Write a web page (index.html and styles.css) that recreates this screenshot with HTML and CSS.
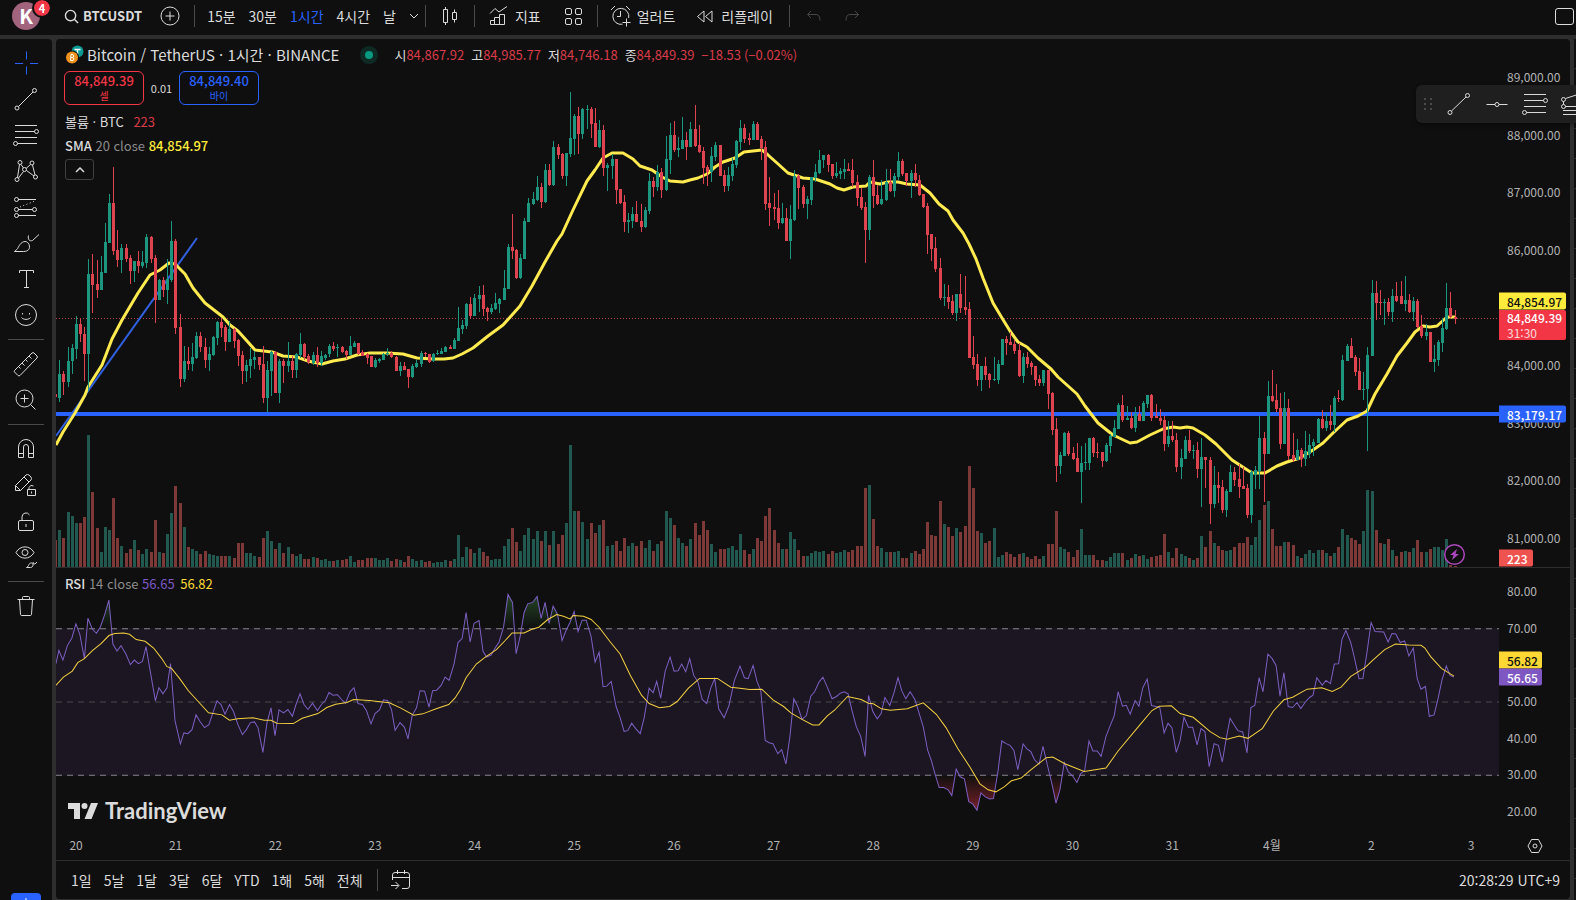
FILE: index.html
```
<!DOCTYPE html>
<html lang="ko">
<head>
    <meta charset="UTF-8">
    <meta name="viewport" content="width=device-width, initial-scale=1.0">
    <title>BTCUSDT 84,849.39</title>
    <link rel="stylesheet" href="styles.css">
</head>
<body>
    <header class="topbar">
        <button class="avatar" aria-label="프로필">K<span class="badge">4</span></button>
        <button class="symbol">
            <svg class="icon-search" viewBox="0 0 16 16"><circle cx="7" cy="7" r="5.5"/><path d="M11 11l4 4"/></svg>
            BTCUSDT
        </button>
        <button class="compare" aria-label="비교">
            <svg viewBox="0 0 20 20"><circle cx="10" cy="10" r="9"/><path d="M10 5.5v9M5.5 10h9"/></svg>
        </button>
        <span class="sep"></span>
        <nav class="intervals">
            <button>15분</button>
            <button>30분</button>
            <button class="active">1시간</button>
            <button>4시간</button>
            <button>날</button>
            <button class="chevron" aria-label="더보기"><svg viewBox="0 0 10 6"><path d="M1 1l4 4 4-4"/></svg></button>
        </nav>
        <span class="sep"></span>
        <button class="tool" aria-label="캔들"><svg viewBox="0 0 20 20"><path d="M3.5 3.5h4v13h-4zM5.5 1v2.5M5.5 16.5v2.5M12.5 6.5h4v7h-4zM14.5 3.5v3M14.5 13.5v3"/></svg></button>
        <span class="sep"></span>
        <button class="tool indicators"><svg viewBox="0 0 20 20"><path d="M1.5 18.5v-4h4v4zM5.5 18.5v-7h5v7zM10.5 18.5h5v-10h-5v3M1 7.5l5-5 4 3.500L18 .5"/></svg>지표</button>
        <button class="tool" aria-label="템플릿"><svg viewBox="0 0 20 20"><rect x="2.5" y="2.5" width="6" height="6" rx="1.5"/><rect x="12.5" y="2.5" width="6" height="6" rx="1.5"/><rect x="2.5" y="12.5" width="6" height="6" rx="1.5"/><rect x="12.5" y="12.5" width="6" height="6" rx="1.5"/></svg></button>
        <span class="sep"></span>
        <button class="tool alert"><svg viewBox="0 0 22 22"><path d="M12.5 19.2A8 8 0 1 1 18.7 13M1 5l4-4M16 1l4 4M10.5 6v5.5H7M16.5 13.5v8M12.5 17.5h8"/></svg>얼러트</button>
        <button class="tool replay"><svg viewBox="0 0 20 20"><path d="M9 5v11L2.5 10.5zM17 5v11l-6.5-5.5z"/></svg>리플레이</button>
        <span class="sep"></span>
        <button class="tool off" aria-label="실행 취소"><svg viewBox="0 0 20 20"><path d="M7 5L3.5 8.5 7 12M3.5 8.5H12q4 0 4 6"/></svg></button>
        <button class="tool off" aria-label="다시 실행"><svg viewBox="0 0 20 20"><path d="M13 5l3.5 3.5L13 12M16.5 8.5H8q-4 0-4 6"/></svg></button>
        <button class="layout" aria-label="레이아웃"></button>
    </header>

    <div class="workspace">
        <aside class="tools">
            <button class="active" aria-label="십자선"><svg viewBox="0 0 28 28"><path d="M14.5 2.5v8M14.5 17.5v8M3 14.5h8M18 14.5h8"/></svg></button>
            <button aria-label="추세선"><svg viewBox="0 0 28 28"><circle cx="5" cy="23" r="2"/><circle cx="22.5" cy="5.5" r="2"/><path d="M6.5 21.5L21 7"/></svg></button>
            <button aria-label="피보나치"><svg viewBox="0 0 28 28"><path d="M3 4.5h22M3 10.5h19.5M3 16.5h22M5.5 22.5H25"/><circle cx="24.5" cy="10.5" r="2"/><circle cx="3.5" cy="22.5" r="2"/></svg></button>
            <button aria-label="패턴"><svg viewBox="0 0 28 28"><circle cx="8" cy="5.5" r="2"/><circle cx="20" cy="6" r="2"/><circle cx="5" cy="22.5" r="2"/><circle cx="23.5" cy="20" r="2"/><circle cx="12.5" cy="12.5" r="2"/><path d="M7.5 7.5L5.5 20.5M20.5 8l2.5 10M9 7.5l2.5 3.5M18.5 7.5l-4.5 4M11.5 14.5L6.5 21M14.5 13.5l7.5 5.5"/></svg></button>
            <button aria-label="예측"><svg viewBox="0 0 28 28"><path d="M6 6.5h18M6 16.5h14.5M6 22.5h18"/><path stroke-dasharray="1 2.5" d="M8 14L23 8"/><circle cx="4.5" cy="6.5" r="2"/><circle cx="4.5" cy="16.5" r="2"/><circle cx="22.5" cy="16.5" r="2"/><circle cx="4.5" cy="22.5" r="2"/></svg></button>
            <button aria-label="브러쉬"><svg viewBox="0 0 28 28"><path d="M2.5 22.5h9c5 0 7-3 5.5-7s-6-4-9 0-1 3.5-5.5 7zM16.5 6.5c-1 4 1 6 4 5l6.5-6"/></svg></button>
            <button aria-label="텍스트"><svg viewBox="0 0 28 28"><path d="M7.5 8V5.5h14V8M14.5 5.5v17M12 22.5h5"/></svg></button>
            <button aria-label="아이콘"><svg viewBox="0 0 28 28"><circle cx="14" cy="14" r="10.5"/><path d="M10.5 12v1.5M17.5 12v1.5M9.5 16.5c1.5 2.5 7.5 2.5 9 0"/></svg></button>
            <hr>
            <button aria-label="자"><svg viewBox="0 0 28 28"><path d="M2.5 20.5l17.5-17.5q1.200-.8 2 0l3 3q.8 1 0 2L8 25.5q-1.200.8-2 0l-3.5-3.5q-.6-.8 0-1.500zM6.5 16.5l2 2M10 13l2.5 2.5M13.5 9.5l2 2M17 6l2.5 2.5"/></svg></button>
            <button aria-label="확대"><svg viewBox="0 0 28 28"><circle cx="12.5" cy="12.5" r="8.5"/><path d="M18.5 18.5l5 5M12.5 8.5v8M8.5 12.5h8"/></svg></button>
            <hr>
            <button aria-label="자석"><svg viewBox="0 0 28 28"><path d="M6.5 22.5V12a7.5 7.5 0 0 1 15 0v10.5h-5V12a2.5 2.5 0 0 0-5 0v10.5zM6.5 18.5h5M16.5 18.5h5"/></svg></button>
            <button aria-label="그리기 모드 유지"><svg viewBox="0 0 28 28"><path d="M3.5 19.5v-5L14 4q1.500-1 3 0l2 2q1 1.500 0 3L8.500 19.500zM12 6l5 5M3.500 14.500l5 5M15.500 18.500h8v6h-8zM17 18.500v-2q1.500-3.500 4.500-1.500M19.500 20.500v2"/></svg></button>
            <button aria-label="잠금"><svg viewBox="0 0 28 28"><rect x="6.5" y="13.5" width="15" height="10" rx="1.5"/><path d="M10 13.5V10a4 4 0 0 1 7.5-2M14 17v3"/></svg></button>
            <button aria-label="숨기기"><svg viewBox="0 0 28 28"><path d="M4 9.5C8 2 18 2 22 9.500 18 17 8 17 4 9.500z"/><circle cx="13" cy="9.500" r="3"/><path d="M14.500 24.500h4c3 0 3.500-4 1-4.500-3-.5-2 3-5 4.500zM21 19q0 2.500 2 2l2-2"/></svg></button>
            <hr>
            <button aria-label="삭제"><svg viewBox="0 0 28 28"><path d="M5.5 7.5h17M10.5 7.5v-2q0-1 1-1h5q1 0 1 1v2M7.5 7.5l1 15q.2 1 1.200 1h8.600q1 0 1.200-1l1-15"/></svg></button>
            <button class="promo" aria-label="더보기"><svg viewBox="0 0 10 10"><path d="M5 5v5"/></svg></button>
        </aside>

        <main class="chart">
            <section class="pane price-pane">
                <div class="plot">
                    <svg id="priceChart" viewBox="56 39 1443 528" preserveAspectRatio="none"></svg>
                    <div class="legend">
                        <div class="legend-title">
                            <svg class="coins" viewBox="0 0 20 20"><circle cx="12.5" cy="6.5" r="6" fill="#0b9a93"/><path d="M9.5 4.5h6M12.5 4.5v5" stroke="#fff" stroke-width="1.5"/><circle cx="7" cy="12.5" r="7" fill="#0f0f0f"/><circle cx="7" cy="12.5" r="6" fill="#f0931e"/><path d="M6 9.5h2q1.5 1.5 0 3 2 1.5 0 3H5.5zM5.8 12.5H8" fill="none" stroke="#fff"/></svg>
                            <h1>Bitcoin / TetherUS · 1시간 · BINANCE</h1>
                            <span class="status"></span>
                            <p class="ohlc">
                                <span>시<b>84,867.92</b></span>
                                <span>고<b>84,985.77</b></span>
                                <span>저<b>84,746.18</b></span>
                                <span>종<b>84,849.39</b></span>
                                <b>−18.53 (−0.02%)</b>
                            </p>
                        </div>
                        <div class="order">
                            <button class="sell">84,849.39<small>셀</small></button>
                            <span class="spread">0.01</span>
                            <button class="buy">84,849.40<small>바이</small></button>
                        </div>
                        <p class="study volume">볼륨 · BTC <b class="red">223</b></p>
                        <p class="study"><strong>SMA</strong> <i>20 close</i> <b class="yellow">84,854.97</b></p>
                        <button class="collapse" aria-label="접기"><svg viewBox="0 0 10 6"><path d="M1 5l4-4 4 4"/></svg></button>
                    </div>
                </div>
                <div class="scale" id="priceScale"></div>
            </section>

            <section class="pane rsi-pane">
                <div class="plot">
                    <svg id="rsiChart" viewBox="56 568 1443 262" preserveAspectRatio="none"></svg>
                    <div class="legend">
                        <p class="study"><strong>RSI</strong> <i>14 close</i> <b class="purple">56.65</b> <b class="gold">56.82</b></p>
                    </div>
                    <div class="logo">
                        <svg viewBox="0 0 30 16"><path d="M0 0h12v16H6V6H0z"/><circle cx="16.5" cy="3" r="3"/><path d="M23 0h7l-6.5 16h-7z"/></svg>
                        TradingView
                    </div>
                </div>
                <div class="scale" id="rsiScale"></div>
            </section>

            <div class="time-axis">
                <div class="days" id="timeScale"></div>
                <button aria-label="차트 설정"><svg viewBox="0 0 16 16"><path d="M4.5 1.5h7L15 8l-3.5 6.5h-7L1 8z"/><circle cx="8" cy="8" r="2"/></svg></button>
            </div>

            <footer class="ranges">
                <button>1일</button>
                <button>5날</button>
                <button>1달</button>
                <button>3달</button>
                <button>6달</button>
                <button>YTD</button>
                <button>1해</button>
                <button>5해</button>
                <button>전체</button>
                <span class="sep"></span>
                <button aria-label="날짜로 이동"><svg viewBox="0 0 20 20"><path d="M1.5 10V5q0-2.5 2.5-2.5h12q2.5 0 2.5 2.5v11q0 2.5-2.5 2.5h-5M1.5 7.5h17M6.5 0v4M13.5 0v4M0 15.5h7.5M4.5 12l3.5 3.5L4.5 19"/></svg></button>
                <time>20:28:29 UTC+9</time>
            </footer>
        </main>

        <aside class="watchlist"></aside>
    </div>

    <div class="favorites">
        <svg class="grip" viewBox="0 0 8 12"><path d="M0 0h2v2H0zM6 0h2v2H6zM0 5h2v2H0zM6 5h2v2H6zM0 10h2v2H0zM6 10h2v2H6z"/></svg>
        <button aria-label="추세선"><svg viewBox="0 0 28 28"><circle cx="5" cy="22.5" r="2"/><circle cx="22.5" cy="5.5" r="2"/><path d="M6.5 21L21 7"/></svg></button>
        <button aria-label="가로선"><svg viewBox="0 0 28 28"><circle cx="14" cy="14.5" r="2"/><path d="M3.5 14.5h8.5M16 14.5h8.5"/></svg></button>
        <button aria-label="피보나치"><svg viewBox="0 0 28 28"><path d="M3 4.5h22M3 10.5h19.5M3 16.5h22M5.5 22.5H25"/><circle cx="24.5" cy="10.5" r="2"/><circle cx="3.5" cy="22.5" r="2"/></svg></button>
        <button aria-label="추세 기반 피보나치"><svg viewBox="0 0 28 28"><circle cx="4.5" cy="9.5" r="2"/><circle cx="4.5" cy="16.5" r="2"/><path d="M6.5 8.5L25 2.5M4.5 11.5v3M6.5 16.5H25M4 20.5h21M4 24.5h21"/></svg></button>
    </div>

    <script src="chart.js"></script>
</body>
</html>
```
FILE: styles.css
```
:root {
    --panel: #0f0f0f;
    --frame: #2e2e2e;
    --text: #dbdbdb;
    --muted: #b2b2b2;
    --red: #f23645;
    --blue: #2962ff;
    --up: #1c967f;
    --down: #dd4450;
}

* {
    box-sizing: border-box;
}

body {
    position: relative;
    margin: 0;
    height: 100vh;
    display: flex;
    flex-direction: column;
    gap: 4px;
    overflow: hidden;
    background: var(--frame);
    color: var(--text);
    font-family: "Noto Sans CJK KR", "Noto Sans", sans-serif;
    font-size: 14px;
    line-height: 20px;
}

h1,
p {
    margin: 0;
    font-weight: normal;
}

b,
i {
    font-weight: normal;
    font-style: normal;
}

button {
    display: flex;
    align-items: center;
    justify-content: center;
    padding: 0;
    border: none;
    background: none;
    color: inherit;
    font: inherit;
    cursor: pointer;
}

svg {
    display: block;
    flex: none;
    overflow: hidden;
}

button svg {
    fill: none;
    stroke: currentColor;
}

.sep {
    width: 1px;
    height: 22px;
    background: #4a4a4a;
}

/* top toolbar */
.topbar {
    flex: none;
    display: flex;
    align-items: center;
    height: 35px;
    padding: 0 2px 3px 12px;
    background: var(--panel);
}

.avatar {
    position: relative;
    width: 28px;
    height: 28px;
    margin-right: 24px;
    border-radius: 50%;
    background: #a2637c;
    color: #fff;
    font-size: 20px;
    font-weight: bold;
}

.badge {
    position: absolute;
    top: -2px;
    right: -10px;
    width: 16px;
    height: 16px;
    border-radius: 50%;
    outline: 2px solid var(--panel);
    background: var(--red);
    font-size: 11px;
    line-height: 16px;
}

.symbol {
    gap: 4px;
    margin-right: 18px;
    font-size: 13px;
    font-weight: bold;
}

.icon-search {
    width: 15px;
    height: 15px;
    stroke-width: 1.5;
}

.compare {
    margin-right: 14px;
}

.compare svg {
    width: 20px;
    height: 20px;
}

.intervals {
    display: flex;
    gap: 13px;
    margin: 0 6px 0 12px;
}

.intervals .active {
    color: var(--blue);
}

.chevron svg {
    width: 10px;
    height: 6px;
}

.tool {
    gap: 6px;
    padding: 0 14px;
}

.tool svg {
    width: 20px;
    height: 20px;
}

.tool.indicators {
    padding-right: 8px;
}

.tool.alert {
    gap: 5px;
    padding-left: 12px;
}

.tool.alert svg {
    width: 22px;
    height: 22px;
}

.tool.replay {
    padding: 0 16px 0 6px;
}

.tool.off {
    padding: 0 4px 0 14px;
    color: #474747;
}

.layout {
    width: 19px;
    height: 17px;
    margin-left: auto;
    border: 1px solid var(--text);
    border-radius: 3px;
}

/* main frame */
.workspace {
    flex: 1;
    min-height: 0;
    display: grid;
    grid-template-columns: 52px minmax(0, 1fr) 2px;
    gap: 4px;
}

.tools {
    display: flex;
    flex-direction: column;
    align-items: center;
    padding-top: 6px;
    border-radius: 0 4px 0 0;
    background: var(--panel);
}

.tools button {
    flex: none;
    width: 36px;
    height: 36px;
}

.tools svg,
.favorites button svg {
    width: 28px;
    height: 28px;
}

.tools .active {
    color: var(--blue);
}

.tools hr {
    width: 36px;
    height: 1px;
    margin: 6px 0;
    border: none;
    background: #4a4a4a;
}

.tools .promo {
    width: 30px;
    height: 30px;
    margin: auto 0 -23px;
    align-items: flex-start;
    border-radius: 4px;
    background: var(--blue);
    color: #fff;
}

.promo svg {
    height: 10px;
}

.chart {
    display: grid;
    grid-template-rows: 529fr 263fr 30px 38px;
    margin-bottom: 1px;
    border-radius: 4px;
    background: var(--panel);
    overflow: hidden;
}

.pane {
    display: grid;
    grid-template-columns: minmax(0, 1fr) 71px;
    min-height: 0;
}

.price-pane {
    border-bottom: 1px solid var(--frame);
}

.plot,
.scale {
    position: relative;
    min-height: 0;
}

.plot > svg {
    position: absolute;
    width: 100%;
    height: 100%;
}

/* legends over the plots */
.legend {
    position: absolute;
    top: 6px;
    left: 9px;
}

.legend-title {
    display: flex;
    align-items: center;
    height: 20px;
}

.coins {
    width: 20px;
    height: 20px;
    margin-right: 2px;
}

.legend h1 {
    font-size: 15px;
    white-space: nowrap;
}

.status {
    width: 8px;
    height: 8px;
    margin: 0 21px 0 26px;
    border-radius: 50%;
    background: #089981;
    box-shadow: 0 0 0 5px #0e2a25;
}

.ohlc {
    display: flex;
    gap: 7px;
    font-size: 13px;
    white-space: nowrap;
}

.ohlc b,
.red {
    color: #d93b48;
}

.order {
    display: flex;
    align-items: center;
    margin: 6px 0 5px -1px;
}

.order button {
    flex-direction: column;
    width: 80px;
    height: 34px;
    border: 1px solid;
    border-radius: 6px;
    font-size: 13px;
    font-weight: 500;
    line-height: 16px;
}

.order small {
    font-size: 10px;
    font-weight: normal;
    line-height: 14px;
}

.sell {
    color: var(--red);
}

.buy {
    color: var(--blue);
}

.spread {
    width: 35px;
    font-size: 11px;
    text-align: center;
}

.study {
    font-size: 13px;
    line-height: 24px;
    white-space: nowrap;
}

.study i {
    color: #8c8c8c;
}

.study strong {
    font-weight: 500;
}

.study .red {
    margin-left: 6px;
}

.yellow {
    color: #ffeb3b;
    font-weight: 500;
}

.purple {
    color: #7e57c2;
}

.study .gold {
    margin-left: 2px;
    color: #fdd835;
}

.rsi-pane .legend {
    top: 4px;
}

.collapse {
    width: 29px;
    height: 21px;
    margin-top: 1px;
    border: 1px solid #404040;
    border-radius: 3px;
}

.collapse svg {
    width: 10px;
    height: 6px;
    stroke-width: 1.5;
}

.logo {
    position: absolute;
    left: 12px;
    bottom: 8px;
    display: flex;
    align-items: center;
    gap: 7px;
    font-family: Lato, sans-serif;
    font-size: 22px;
    font-weight: bold;
    line-height: 24px;
}

.logo svg {
    width: 30px;
    height: 16px;
    fill: currentColor;
}

/* scales */
.scale {
    font-size: 12px;
    line-height: 17px;
}

.scale span {
    position: absolute;
    left: 0;
    padding: 0 4px 0 8px;
    transform: translateY(-50%);
    color: var(--muted);
    white-space: nowrap;
}

.scale .tag {
    border-radius: 0 2px 2px 0;
    color: #fff;
    font-weight: 500;
}

.scale .tag-sma {
    background: #ffeb3b;
    color: #0f0f0f;
}

.scale .tag-last {
    background: var(--red);
    line-height: 15px;
}

.tag-last small {
    display: block;
    font-size: 12px;
    font-weight: normal;
    opacity: 0.8;
}

.scale .tag-line {
    background: var(--blue);
}

.scale .tag-volume {
    padding-right: 5px;
    background: #ef5350;
}

.scale .tag-gold {
    background: #fdd835;
    color: #0f0f0f;
}

.scale .tag-purple {
    background: #7e57c2;
}

.time-axis {
    display: grid;
    grid-template-columns: minmax(0, 1fr) 71px;
    border-bottom: 1px solid var(--frame);
}

.days {
    position: relative;
    color: var(--muted);
    font-size: 12px;
}

.days span {
    position: absolute;
    top: 4px;
    transform: translateX(-50%);
}

.time-axis svg {
    width: 16px;
    height: 16px;
}

.ranges {
    display: flex;
    align-items: center;
    gap: 12px;
    padding: 0 10px 0 15px;
}

.ranges svg {
    width: 20px;
    height: 20px;
}

.ranges .sep {
    margin: 0 1px 0 2px;
}

.ranges time {
    margin-left: auto;
}

.watchlist {
    background: repeating-linear-gradient(#0f0f0f 0 29px, #2e2e2e 29px 30px);
}

/* favourite drawing tools, floats over the chart */
.favorites {
    position: absolute;
    top: 85px;
    right: -11px;
    display: flex;
    align-items: center;
    gap: 10px;
    height: 38px;
    padding-left: 8px;
    border-radius: 6px;
    background: #1f1f1f;
    box-shadow: 0 2px 4px rgba(0, 0, 0, 0.4);
}

.grip {
    width: 8px;
    height: 12px;
    margin-right: 3px;
    fill: #4a4a4a;
}

/* chart marks */
.up {
    fill: var(--up);
}

.down {
    fill: var(--down);
}

.vol-up {
    fill: #215951;
}

.vol-down {
    fill: #7d3838;
}

.last-price {
    stroke: #b8434d;
    stroke-dasharray: 1 2;
}

.level {
    stroke: var(--blue);
    stroke-width: 4;
}

.trend {
    stroke: #3061e0;
    stroke-width: 2;
}

.sma {
    fill: none;
    stroke: #ffeb4f;
    stroke-width: 3;
    stroke-linejoin: round;
}

.bolt circle {
    fill: #0f0f0f;
    stroke: #ab47bc;
    stroke-width: 1.5;
}

.bolt path {
    fill: #ab47bc;
}

.band {
    fill: #1b1621;
}

.guide {
    stroke: #85858a;
    stroke-dasharray: 6 5;
}

.guide-mid {
    stroke: #4b484f;
}

.rsi {
    fill: none;
    stroke: #7e5fc4;
    stroke-width: 1;
}

.rsi-ma {
    fill: none;
    stroke: #f5d142;
    stroke-width: 1;
}
```
FILE: chart.js
```
// One bar per hour: direction, high, body top, body bottom, low, volume.
// Levels are thirds of a chart unit below the block's top.
const blocks = [
    { top: 150, bars: `d 732 732 742 742 1170,u 630 672 744 755 1140,d 664 672 695 735 1164,u 592 634 695 712 1086,
u 582 594 634 672 1098,u 498 522 597 628 1119,d 507 522 553 575 1119,d 531 553 612 692 1101,u 327 373 612 722 855,
d 312 373 404 490 1026,d 330 402 420 444 1134,u 318 367 420 420 1206,u 219 277 369 369 1131,u 132 159 279 279 1140,
d 51 159 303 315 1044,d 240 300 330 351 1164,u 282 294 330 369 1188,d 282 294 327 336 1209,d 315 324 363 402 1197,
u 333 333 363 396 1170,d 303 333 348 369 1200,u 303 336 348 354 1212,u 252 261 339 354 1197,d 258 261 327 339 1206,
d 315 324 450 519 1110,u 387 390 450 450 1206,d 381 390 420 441 1209,u 327 387 420 462 1152,u 213 273 390 396 1089,
d 267 273 534 552 1008,d 492 531 687 711 1059,u 588 633 687 696 1131,d 591 633 642 660 1191,u 579 621 642 663 1197,
u 546 558 624 627 1203,d 546 558 591 606 1212,d 564 591 630 654 1203,u 591 612 630 663 1212,u 558 561 615 618 1215,
u 513 516 564 585 1218,d 504 516 534 561 1218,d 525 531 576 603 1218,u 513 537 576 576 1218,d 534 537 573 594 1224,
d 567 570 618 648 1179,d 603 615 663 702 1179,u 630 645 663 696 1209,u 594 627 648 684 1209,u 603 621 630 657 1218,
d 621 621 645 660 1221,d 588 642 744 759 1164,u 633 660 744 786 1143,u 603 606 663 738 1173,d 603 606 729 729 1197,
u 627 633 729 759 1179,d 627 633 648 699 1209,u 576 633 648 666 1191,d 618 633 660 684 1212,u 609 612 660 684 1218,
u 549 582 615 624 1212,d 579 582 621 630 1227,d 612 618 636 642 1227,u 606 615 639 645 1221,d 591 615 639 651 1224,
u 603 618 639 648 1230,u 612 615 624 630 1227,u 582 588 612 621 1233,d 576 588 597 603 1233,u 582 591 593 621 1230,
d 588 591 606 609 1230,d 600 603 615 627 1227,u 558 588 615 615 1218,u 573 579 591 591 1236,d 579 579 612 615 1230,
d 600 606 618 618 1230,d 609 612 624 642 1224,d 618 618 651 651 1224,u 624 630 651 654 1224,u 624 627 633 639 1230,
u 609 612 630 630 1230,u 594 609 612 618 1224,d 603 609 621 624 1233,d 618 621 663 663 1227,u 636 648 663 678 1230,
d 636 648 660 660 1236,d 657 657 681 714 1218,u 642 648 681 684 1227,u 630 639 651 654 1233,u 603 609 642 651 1230,
d 606 609 612 621 1236,d 612 612 636 639 1233,u 609 612 633 636 1239,u 600 609 612 615 1236` },
    { top: 80, bars: `u 804 813 822 822 1446,u 798 801 816 816 1440,d 795 801 806 806 1443,u 774 780 806 806 1438,
u 681 744 782 782 1365,u 720 735 746 762 1431,u 669 672 738 747 1401,d 651 672 708 717 1407,u 642 654 708 708 1419,
u 618 645 657 696 1404,d 615 645 687 708 1416,d 681 684 696 723 1428,u 672 684 696 702 1440,u 639 669 687 690 1437,
u 654 657 672 699 1437,u 570 624 660 660 1398,u 492 501 627 627 1377,d 402 501 513 537 1344,d 507 510 594 597 1386,
u 522 534 594 597 1413,u 414 423 537 537 1365,u 354 369 426 426 1344,u 336 357 372 375 1377,u 288 321 360 363 1353,
d 309 321 366 384 1383,u 252 270 366 369 1353,d 252 270 315 318 1395,u 183 201 315 318 1353,d 192 201 225 237 1392,
d 219 222 288 297 1365,u 219 219 288 318 1329,u 36 174 222 231 1095,u 102 108 177 225 1293,d 81 108 162 222 1293,
u 84 87 162 177 1326,u 75 86 89 147 1377,d 81 87 132 174 1329,d 84 129 201 201 1359,u 120 150 201 204 1335,
d 135 150 264 288 1320,u 249 255 264 333 1398,u 222 237 258 297 1395,d 237 237 330 372 1383,d 327 327 369 372 1413,
d 345 366 426 456 1374,u 399 420 426 459 1398,u 381 402 423 444 1389,d 363 402 426 426 1398,d 372 423 441 456 1383,
u 381 390 441 444 1404,u 279 303 393 402 1380,d 291 303 321 351 1413,u 255 276 321 333 1392,d 264 276 330 354 1383,
u 168 237 330 333 1293,u 129 165 240 282 1314,d 123 165 210 216 1335,u 171 204 210 231 1374,u 111 180 207 207 1389,
d 156 180 201 240 1398,u 126 147 201 201 1377,d 75 147 198 201 1329,d 135 195 216 219 1365,d 201 213 264 312 1323,
d 255 261 276 318 1350,u 201 228 276 306 1392,u 186 195 231 243 1416,d 195 195 288 288 1407,d 270 285 318 336 1407,
u 261 285 318 333 1404,u 234 252 288 303 1398,u 180 183 255 264 1410,u 120 144 186 210 1362,d 132 144 177 189 1410,
d 159 174 180 195 1422,u 123 132 180 180 1407,d 126 132 180 180 1374,d 168 177 204 240 1383,d 183 201 372 390 1308,
d 291 369 384 438 1284,d 339 381 387 420 1350,d 330 384 429 447 1389,u 369 414 429 432 1407,d 384 414 483 483 1407,
u 375 417 483 537 1356,u 270 288 420 423 1377,d 282 288 324 387 1410,d 315 321 372 384 1428,u 348 357 372 417 1428,
u 291 291 360 375 1419,u 252 276 294 306 1413,u 210 240 279 282 1416,u 225 225 240 264 1413,d 222 225 255 276 1422` },
    { top: 130, bars: `d 102 102 138 147 1263,u 96 129 138 144 1269,u 114 123 132 147 1266,u 87 117 126 147 1260,
d 99 117 123 123 1266,d 87 120 159 171 1260,d 135 156 204 228 1248,d 174 201 234 240 1248,d 216 231 300 399 1074,
u 135 141 300 330 1065,d 90 141 198 234 1167,d 165 195 222 225 1248,u 150 207 222 225 1254,u 117 156 210 213 1266,
d 117 156 183 186 1266,u 129 138 183 201 1266,u 66 93 141 150 1263,d 87 93 132 138 1284,d 129 129 153 168 1284,
u 120 129 153 204 1269,d 102 129 150 171 1263,d 135 150 195 198 1272,d 192 192 231 234 1257,d 219 228 315 372 1176,
d 312 312 357 393 1215,d 321 354 417 426 1218,d 384 414 504 510 1113,u 462 501 504 528 1182,d 465 501 516 537 1191,
d 495 513 549 555 1218,u 492 492 549 573 1194,d 432 492 534 549 1206,d 438 531 540 555 1188,d 516 537 684 684 1008,
d 618 681 705 717 1074,d 672 702 750 768 1203,u 708 708 750 783 1209,d 681 708 735 750 1239,d 729 732 750 774 1233,
u 681 747 750 753 1194,u 690 702 750 762 1281,u 627 627 705 705 1275,d 618 627 639 675 1266,d 606 636 645 645 1272,
d 630 642 663 672 1281,d 639 660 738 741 1272,u 669 681 738 759 1269,d 666 681 702 714 1281,d 693 699 711 735 1287,
d 708 708 750 768 1278,d 735 747 759 768 1287,u 720 720 759 768 1278,d 720 720 792 837 1242,d 786 789 900 915 1242,
d 864 897 1008 1056 1143,u 966 975 1008 1032 1251,u 906 909 978 978 1257,d 903 909 972 978 1266,d 951 969 987 990 1281,
d 939 984 1026 1026 1260,u 948 999 1026 1119 1197,u 939 996 999 1020 1275,u 924 924 999 1020 1275,d 921 924 969 981 1275,
d 939 966 969 984 1290,d 966 966 993 1011 1290,u 939 945 993 996 1293,u 912 918 948 969 1281,u 870 894 921 921 1269,
u 819 825 897 897 1269,d 795 825 870 876 1269,u 828 864 870 870 1290,d 846 864 894 897 1284,u 831 852 894 906 1272,
d 828 852 873 873 1278,u 813 819 873 873 1275,u 795 795 822 834 1287,d 792 795 864 873 1281,d 822 858 864 864 1278,
d 837 864 873 885 1275,d 858 870 942 963 1212,u 873 918 942 951 1266,d 873 918 930 936 1284,d 909 930 1011 1026 1254,
u 957 984 1011 1047 1272,u 918 930 987 987 1278,d 900 930 963 969 1284,u 945 960 963 987 1290,d 936 960 1017 1044 1284,
u 924 981 1017 1131 1218,d 981 981 990 1074 1251,d 981 990 1122 1182 1203,u 1008 1065 1122 1134 1239,
d 1026 1065 1074 1119 1248,d 1050 1071 1140 1149 1260,u 1077 1083 1140 1161 1263` },
    { top: 250, bars: `u 645 666 726 726 900,d 651 666 690 708 891,d 642 687 711 744 879,d 651 708 717 717 879,
d 702 714 795 804 861,u 660 666 795 819 885,u 648 660 675 717 861,u 498 564 663 717 810,d 546 564 612 756 765,
u 393 438 612 612 753,d 360 438 453 456 837,d 402 450 477 486 888,d 429 474 582 597 888,u 426 474 582 582 876,
d 447 474 618 630 876,d 549 615 630 636 885,u 567 600 630 630 918,d 594 600 627 651 924,u 543 603 627 648 912,
u 552 585 612 624 900,u 567 576 588 618 909,u 504 507 579 579 900,d 480 507 534 537 900,u 489 513 534 543 909,
d 465 513 525 540 918,u 438 444 525 546 909,d 420 444 447 456 891,u 315 330 450 453 837,u 282 288 333 333 855,
d 264 288 324 324 864,d 315 321 366 378 870,d 324 363 420 420 882,u 366 417 420 450 843,u 291 315 417 603 720,
u 90 129 318 318 723,d 93 129 159 210 840,d 120 156 159 195 879,u 147 156 159 225 882,d 144 156 186 198 867,
u 117 138 186 216 900,d 96 138 153 156 918,d 93 138 162 162 906,u 78 150 162 183 903,d 132 150 186 189 906,
u 141 153 186 213 894,d 147 153 231 234 870,d 195 228 258 264 906,u 222 246 258 270 906,d 246 246 336 336 897,
u 285 327 336 366 891,u 270 276 330 348 891,u 204 234 279 306 900,u 99 174 237 240 867,d 126 174 201 204 945,
d 180 201 207 222 948` }
];

const sma = `56,445 63,432 75,413 85,395 88,387 102,365 112,339 122,320 138,293 150,275 160,270 169,263 175,264
185,274 193,288 205,303 223,317 230,325 238,331 247,341 255,350 272,352 283,356 297,357 308,361 322,364 333,361
345,359 357,355 370,353 387,353 403,354 417,358 433,359 444,359 453,358 462,354 473,348 488,336 503,325 512,315
520,306 532,286 545,262 557,241 562,234 573,210 587,181 595,170 603,158 612,153 623,153 633,159 640,166 652,170
662,177 670,181 683,182 690,180 698,178 707,174 715,167 723,162 735,158 744,152 762,150 768,155 777,163 788,173
803,178 815,179 830,184 837,188 844,190 853,187 866,186 870,182 880,184 888,182 898,182 907,184 920,185 930,193
939,204 948,211 953,220 963,233 969,244 976,259 983,278 993,303 1002,318 1010,331 1018,342 1027,347 1038,358
1051,369 1058,377 1077,394 1085,406 1098,423 1113,435 1130,443 1137,442 1150,435 1163,429 1173,427 1180,428
1187,427 1193,428 1205,435 1216,444 1232,460 1252,473 1265,473 1277,466 1287,462 1300,458 1313,450 1323,443
1333,433 1347,420 1358,416 1367,411 1375,394 1387,374 1397,356 1407,343 1415,332 1423,326 1430,327 1437,326
1447,317 1455,317`;

// oscillator traces, first and second half
const rsiHalves = [
    { x: 50, scale: 2.24, rsi: `13,281 20,240 29,269 39,226 49,203 58,161 67,193 77,265 85,144 95,177 104,189 113,170
122,135 132,90 141,221 150,242 159,226 170,251 180,283 189,269 198,280 207,273 215,229 225,305 236,391 244,352 253,370
262,352 270,280 280,450 292,520 300,487 309,489 318,477 327,433 336,453 346,471 356,462 365,427 374,391 383,402 392,431
402,402 411,423 421,462 431,492 440,477 449,456 458,454 466,471 477,545 486,456 495,412 504,495 513,418 523,427 533,417
543,437 551,402 560,370 569,402 578,417 588,398 599,420 608,402 617,390 625,366 634,374 644,373 653,387 662,398 672,364
681,352 690,399 700,402 709,421 719,460 728,429 738,418 747,388 756,390 765,417 773,479 784,456 794,470 802,505 811,435
821,412 829,361 839,362 849,410 857,361 866,359 876,345 885,320 894,330 905,281 914,217 923,205 932,127 941,215 950,159
961,151 970,243 978,260 988,254 997,233 1006,215 1016,170 1026,73 1036,97 1044,250 1053,199 1062,127 1070,101 1081,97
1091,79 1100,145 1109,97 1118,160 1127,108 1137,133 1147,211 1156,180 1165,156 1174,124 1183,184 1192,150 1201,150
1212,199 1221,275 1230,246 1239,349 1247,347 1257,333 1268,408 1277,441 1286,482 1294,480 1303,458 1312,474 1322,489
1331,441 1342,353 1351,367 1359,333 1368,383 1378,302 1389,260 1398,302 1407,301 1415,281 1424,304 1433,265 1442,315
1451,333 1461,387 1471,399 1480,353 1489,325 1498,415 1510,442 1521,405 1533,330`,
      average: `13,345 30,320 50,302 62,277 77,265 95,241 115,219 132,196 145,190 165,188 178,192 193,208 213,213
232,233 250,264 262,289 272,293 290,324 310,361 334,396 355,427 385,433 402,449 420,445 455,442 480,449 495,449 508,458
545,459 565,443 600,429 620,411 640,401 665,396 680,387 715,390 760,397 785,412 815,434 835,430 865,415 893,402 907,383
920,356 932,322 955,281 975,260 1000,238 1020,210 1035,188 1062,188 1078,178 1095,171 1115,148 1135,133 1150,138
1165,146 1172,136 1195,138 1212,148 1230,171 1255,215 1277,251 1300,315 1325,374 1342,399 1365,412 1388,408 1405,393
1430,353 1455,324 1495,324 1525,350` },
    { x: 740, scale: 2.063, rsi: `0,287 9,322 17,325 27,285 35,333 43,361 52,509 60,516 68,519 78,549 86,537 95,580
103,498 111,385 119,407 128,446 137,435 146,377 154,364 163,335 171,320 181,353 190,385 199,378 207,368 215,364 223,370
231,420 240,468 249,497 258,557 265,375 274,423 283,445 291,429 299,381 309,405 318,366 326,322 334,362 342,385 351,364
361,388 369,426 378,468 387,538 395,571 403,612 411,650 420,650 429,656 437,674 446,595 454,618 463,624 472,692 480,699
489,718 497,666 506,678 515,684 523,683 532,603 540,511 549,519 557,524 565,539 573,597 584,520 592,535 600,543 608,568
617,580 625,527 634,582 643,636 652,697 660,657 669,575 677,603 686,615 695,635 703,608 711,600 720,511 728,541 737,541
745,557 755,497 763,468 772,436 780,364 789,407 797,404 805,431 815,390 823,407 831,352 840,326 849,405 858,408 866,411
875,487 883,458 891,471 900,545 908,510 916,440 925,470 934,470 943,523 951,474 959,483 968,588 978,519 987,524 995,574
1003,504 1011,443 1019,462 1027,480 1037,484 1046,547 1054,411 1062,405 1071,322 1079,364 1089,251 1098,265 1106,286
1114,377 1122,307 1131,408 1140,411 1149,396 1157,414 1166,395 1175,381 1182,374 1190,322 1201,344 1209,330 1218,340
1226,281 1235,280 1242,207 1250,181 1260,217 1268,265 1277,325 1285,324 1293,250 1302,157 1310,184 1328,185 1337,215
1345,190 1353,191 1362,217 1371,212 1380,257 1389,233 1397,325 1405,356 1414,348 1422,437 1432,433 1440,385 1448,330
1457,287 1465,315 1473,320`,
      average: `0,353 20,357 45,356 68,388 90,408 105,427 125,444 150,463 163,463 180,436 195,419 222,378 250,387
265,398 275,400 292,415 310,419 345,415 378,397 405,431 425,471 450,535 475,590 495,639 512,657 528,663 545,648 560,630
580,622 600,597 632,561 645,559 670,579 710,602 755,592 780,541 825,463 850,420 865,407 890,406 908,429 935,440 970,483
990,501 1005,506 1030,496 1048,503 1078,473 1100,422 1122,388 1140,380 1170,356 1200,352 1222,363 1240,350 1260,318
1290,291 1305,270 1330,238 1352,221 1380,224 1405,225 1413,233 1425,259 1447,294 1473,317` }
];

function rect(cls, x, y, width, bottom) {
    const height = Math.max(1, bottom - y);
    return `<rect class="${cls}" x="${x}" y="${y}" width="${width}" height="${height}"/>`;
}

function drawPrice() {
    let volume = '';
    let candles = '';
    let index = -1;

    for (const block of blocks) {
        for (const bar of block.bars.split(',')) {
            const [dir, ...levels] = bar.trim().split(' ');
            const [high, top, bottom, low, vol] = levels.map(v => Math.round(block.top + v / 3));
            const x = Math.round(59.2 + index * 4.153);
            const side = dir === 'u' ? 'up' : 'down';
            volume += rect('vol-' + side, x - 1, vol, 3, 567);
            candles += rect(side, x, high, 1, low) + rect(side, x - 1, top, 3, bottom);
            index++;
        }
    }

    document.getElementById('priceChart').innerHTML = `
        <g shape-rendering="crispEdges">${volume}
            <path class="last-price" d="M56 318.5H1499"/>
            <path class="level" d="M56 414H1499"/>
        </g>
        <path class="trend" d="M56 436L197 238"/>
        <polyline class="sma" points="${sma}"/>
        <g shape-rendering="crispEdges">${candles}</g>
        <g class="bolt"><circle cx="1454.5" cy="554.5" r="9.8"/><path d="M1457 549l-7 6h3.5l-1.5 5 7-6h-3.5z"/></g>`;
}

function trace(key) {
    return rsiHalves.map(half => half[key].trim().split(/\s+/).map(point => {
        const [x, y] = point.split(',');
        return (half.x + x / half.scale).toFixed(1) + ',' + (570 + y / 3).toFixed(1);
    }).join(' ')).join(' ');
}

function drawRsi() {
    const rsi = trace('rsi');

    document.getElementById('rsiChart').innerHTML = `
        <defs>
            <linearGradient id="hot" gradientUnits="userSpaceOnUse" x1="0" y1="580" x2="0" y2="628">
                <stop offset="0" stop-color="#4caf50" stop-opacity=".5"/><stop offset="1" stop-color="#4caf50" stop-opacity="0"/>
            </linearGradient>
            <linearGradient id="cold" gradientUnits="userSpaceOnUse" x1="0" y1="774" x2="0" y2="820">
                <stop offset="0" stop-color="#f23645" stop-opacity="0"/><stop offset="1" stop-color="#f23645" stop-opacity=".6"/>
            </linearGradient>
            <clipPath id="above"><rect x="56" y="568" width="1443" height="60"/></clipPath>
            <clipPath id="below"><rect x="56" y="775" width="1443" height="60"/></clipPath>
        </defs>
        <rect class="band" x="56" y="628" width="1443" height="147"/>
        <path class="guide" d="M56 628.5H1499M56 774.5H1499"/>
        <path class="guide guide-mid" d="M56 701.5H1499"/>
        <polygon clip-path="url(#above)" fill="url(#hot)" points="56,628 ${rsi} 1455,628"/>
        <polygon clip-path="url(#below)" fill="url(#cold)" points="56,775 ${rsi} 1455,775"/>
        <polyline class="rsi" points="${rsi}"/>
        <polyline class="rsi-ma" points="${trace('average')}"/>`;
}

function addLabels(id, side, labels) {
    document.getElementById(id).innerHTML = labels.map(([text, at, cls]) =>
        `<span class="${cls || ''}" style="${side}: ${at.toFixed(2)}%">${text}</span>`).join('');
}

const priceAt = y => (y - 39) / 528 * 100;
const rsiAt = y => (y - 568) / 262 * 100;

const prices = [89, 88, 87, 86, 84, 83, 82, 81].map(k => [k + ',000.00', priceAt(76 + (89 - k) * 57.6)]);
addLabels('priceScale', 'top', prices.concat([
    ['84,854.97', priceAt(301), 'tag tag-sma'],
    ['84,849.39<small>31:30</small>', priceAt(325), 'tag tag-last'],
    ['83,179.17', priceAt(413.5), 'tag tag-line'],
    ['223', priceAt(558.5), 'tag tag-volume']
]));

const levels = [80, 70, 50, 40, 30, 20].map(v => [v + '.00', rsiAt(590 + (80 - v) * 3.65)]);
addLabels('rsiScale', 'top', levels.concat([
    ['56.82', rsiAt(660), 'tag tag-gold'],
    ['56.65', rsiAt(677), 'tag tag-purple']
]));

const days = ['20', '21', '22', '23', '24', '25', '26', '27', '28', '29', '30', '31', '4월', '2', '3'];
addLabels('timeScale', 'left', days.map((day, i) => [day, (20 + i * 99.65) / 1443 * 100]));

drawPrice();
drawRsi();
```
